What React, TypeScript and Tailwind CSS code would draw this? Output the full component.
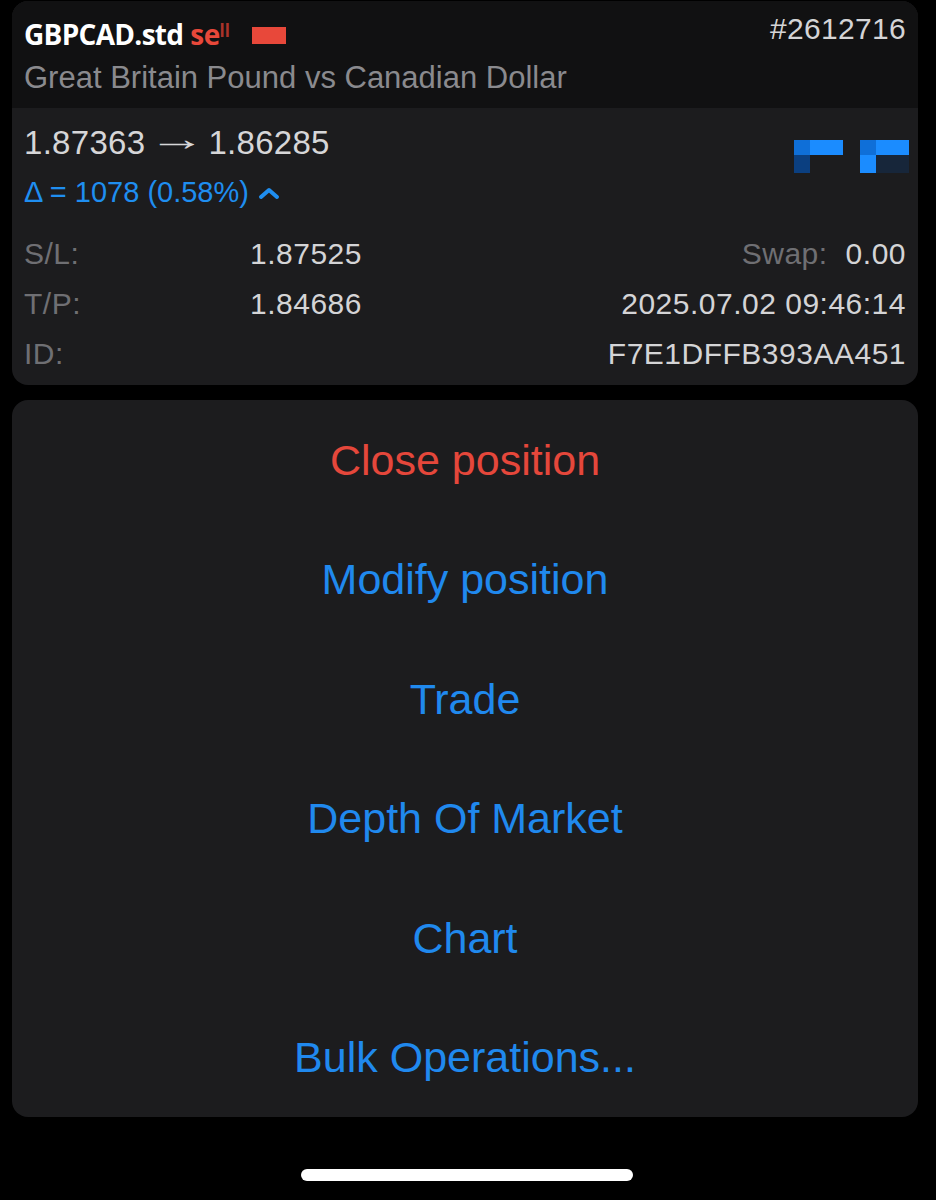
import React from "react";

const SANS = "font-['Liberation_Sans',Arial,sans-serif]";

// Rows of the position details block
const DETAILS = [
  { label: "S/L:", value: "1.87525", rightLabel: "Swap:", right: "0.00" },
  { label: "T/P:", value: "1.84686", rightLabel: "", right: "2025.07.02 09:46:14" },
  { label: "ID:", value: "", rightLabel: "", right: "F7E1DFFB393AA451" },
];

const ACTIONS = [
  { label: "Close position", danger: true },
  { label: "Modify position" },
  { label: "Trade" },
  { label: "Depth Of Market" },
  { label: "Chart" },
  { label: "Bulk Operations..." },
];

function ChevronUp() {
  return (
    <svg width="22" height="14" viewBox="0 0 22 14" className="ml-[9px]">
      <path d="M3 11 L11 4 L19 11" fill="none" stroke="#1f8ef0" strokeWidth="4" strokeLinecap="round" strokeLinejoin="round" />
    </svg>
  );
}

// Pixelated (censored) blue block at the right of the card
function Censored() {
  return (
    <div className="flex items-start gap-[17px] mt-[22px] mr-[-3px]">
      <div className="flex flex-col">
        <div className="flex">
          <div className="w-[16px] h-[15px] bg-[#0f6fd8]" />
          <div className="w-[33px] h-[15px] bg-[#1b8cff]" />
        </div>
        <div className="w-[16px] h-[18px] bg-[#0b3f80]" />
      </div>
      <div className="flex flex-col">
        <div className="flex">
          <div className="w-[16px] h-[15px] bg-[#0f6fd8]" />
          <div className="w-[33px] h-[15px] bg-[#1b8cff]" />
        </div>
        <div className="flex">
          <div className="w-[16px] h-[18px] bg-[#1b8cff]" />
          <div className="w-[33px] h-[18px] bg-[#17263a]" />
        </div>
      </div>
    </div>
  );
}

export default function App() {
  return (
    <div className={`w-[936px] h-[1200px] bg-black flex flex-col ${SANS}`}>
      {/* Position card */}
      <div className="ml-[12px] w-[906px] mt-[1px] rounded-[16px] overflow-hidden bg-[#1c1c1e]">
        <div className="bg-[#111112] px-[12px] pt-[12px] h-[107px]">
          <div className="flex items-start justify-between">
            <div className="flex items-center h-[42px]">
              <span className="font-['Open_Sans',sans-serif] font-bold text-[28px] tracking-[-0.7px] text-white">
                GBPCAD.std
              </span>
              <span className="ml-[7px] font-['Open_Sans',sans-serif] font-bold text-[28px] tracking-[-0.6px] text-[#e8483a]">
                se
              </span>
              <span className="font-['Open_Sans',sans-serif] font-bold text-[17px] text-[#d23c30] self-start mt-[5px] opacity-80">
                ll
              </span>
              <div className="ml-[22px] mt-[2px] w-[34px] h-[17px] bg-[#e8483a]" />
            </div>
            <span className="text-[30px] leading-[32px] tracking-[0.3px] text-[#d4d4d6]">#2612716</span>
          </div>
          <div className="text-[31px] leading-[40px] text-[#8a8a8e] mt-[3px]">
            Great Britain Pound vs Canadian Dollar
          </div>
        </div>

        <div className="px-[12px] pt-[10px] pb-[7px]">
          <div className="flex justify-between">
            <div className="flex flex-col">
              <div className="h-[50px] flex items-center text-[33px] text-[#d6d6d8]">
                <span className="tracking-[0.3px]">1.87363</span>
                <span className="inline-block mx-[15px] scale-x-[1.75] -translate-y-[4px]">→</span>
                <span className="tracking-[0.3px]">1.86285</span>
              </div>
              <div className="h-[50px] flex items-center text-[29px] text-[#1f8ef0]">
                Δ = 1078 (0.58%)
                <ChevronUp />
              </div>
            </div>
            <Censored />
          </div>
          <div className="mt-[10px]">
            {DETAILS.map((row) => (
              <div key={row.label} className="h-[50px] flex items-center text-[30px] tracking-[0.5px]">
                <span className="w-[226px] text-[#6f6f73]">{row.label}</span>
                <span className="text-[#d4d4d6]">{row.value}</span>
                <span className="ml-auto text-[#6f6f73]">{row.rightLabel}</span>
                <span className={`text-[#d4d4d6] ${row.rightLabel ? "ml-[18px]" : ""}`}>{row.right}</span>
              </div>
            ))}
          </div>
        </div>
      </div>

      {/* Action sheet */}
      <div className="ml-[12px] w-[906px] mt-[15px] rounded-[16px] bg-[#1c1c1e] flex flex-col">
        {ACTIONS.map((a) => (
          <div
            key={a.label}
            className={`h-[119.5px] flex items-center justify-center text-[43px] ${
              a.danger ? "text-[#e5473b]" : "text-[#2089ee]"
            }`}
          >
            {a.label}
          </div>
        ))}
      </div>

      {/* Home indicator */}
      <div className="mt-[52px] flex justify-center">
        <div className="ml-[-2px] w-[332px] h-[12px] rounded-full bg-white" />
      </div>
    </div>
  );
}
